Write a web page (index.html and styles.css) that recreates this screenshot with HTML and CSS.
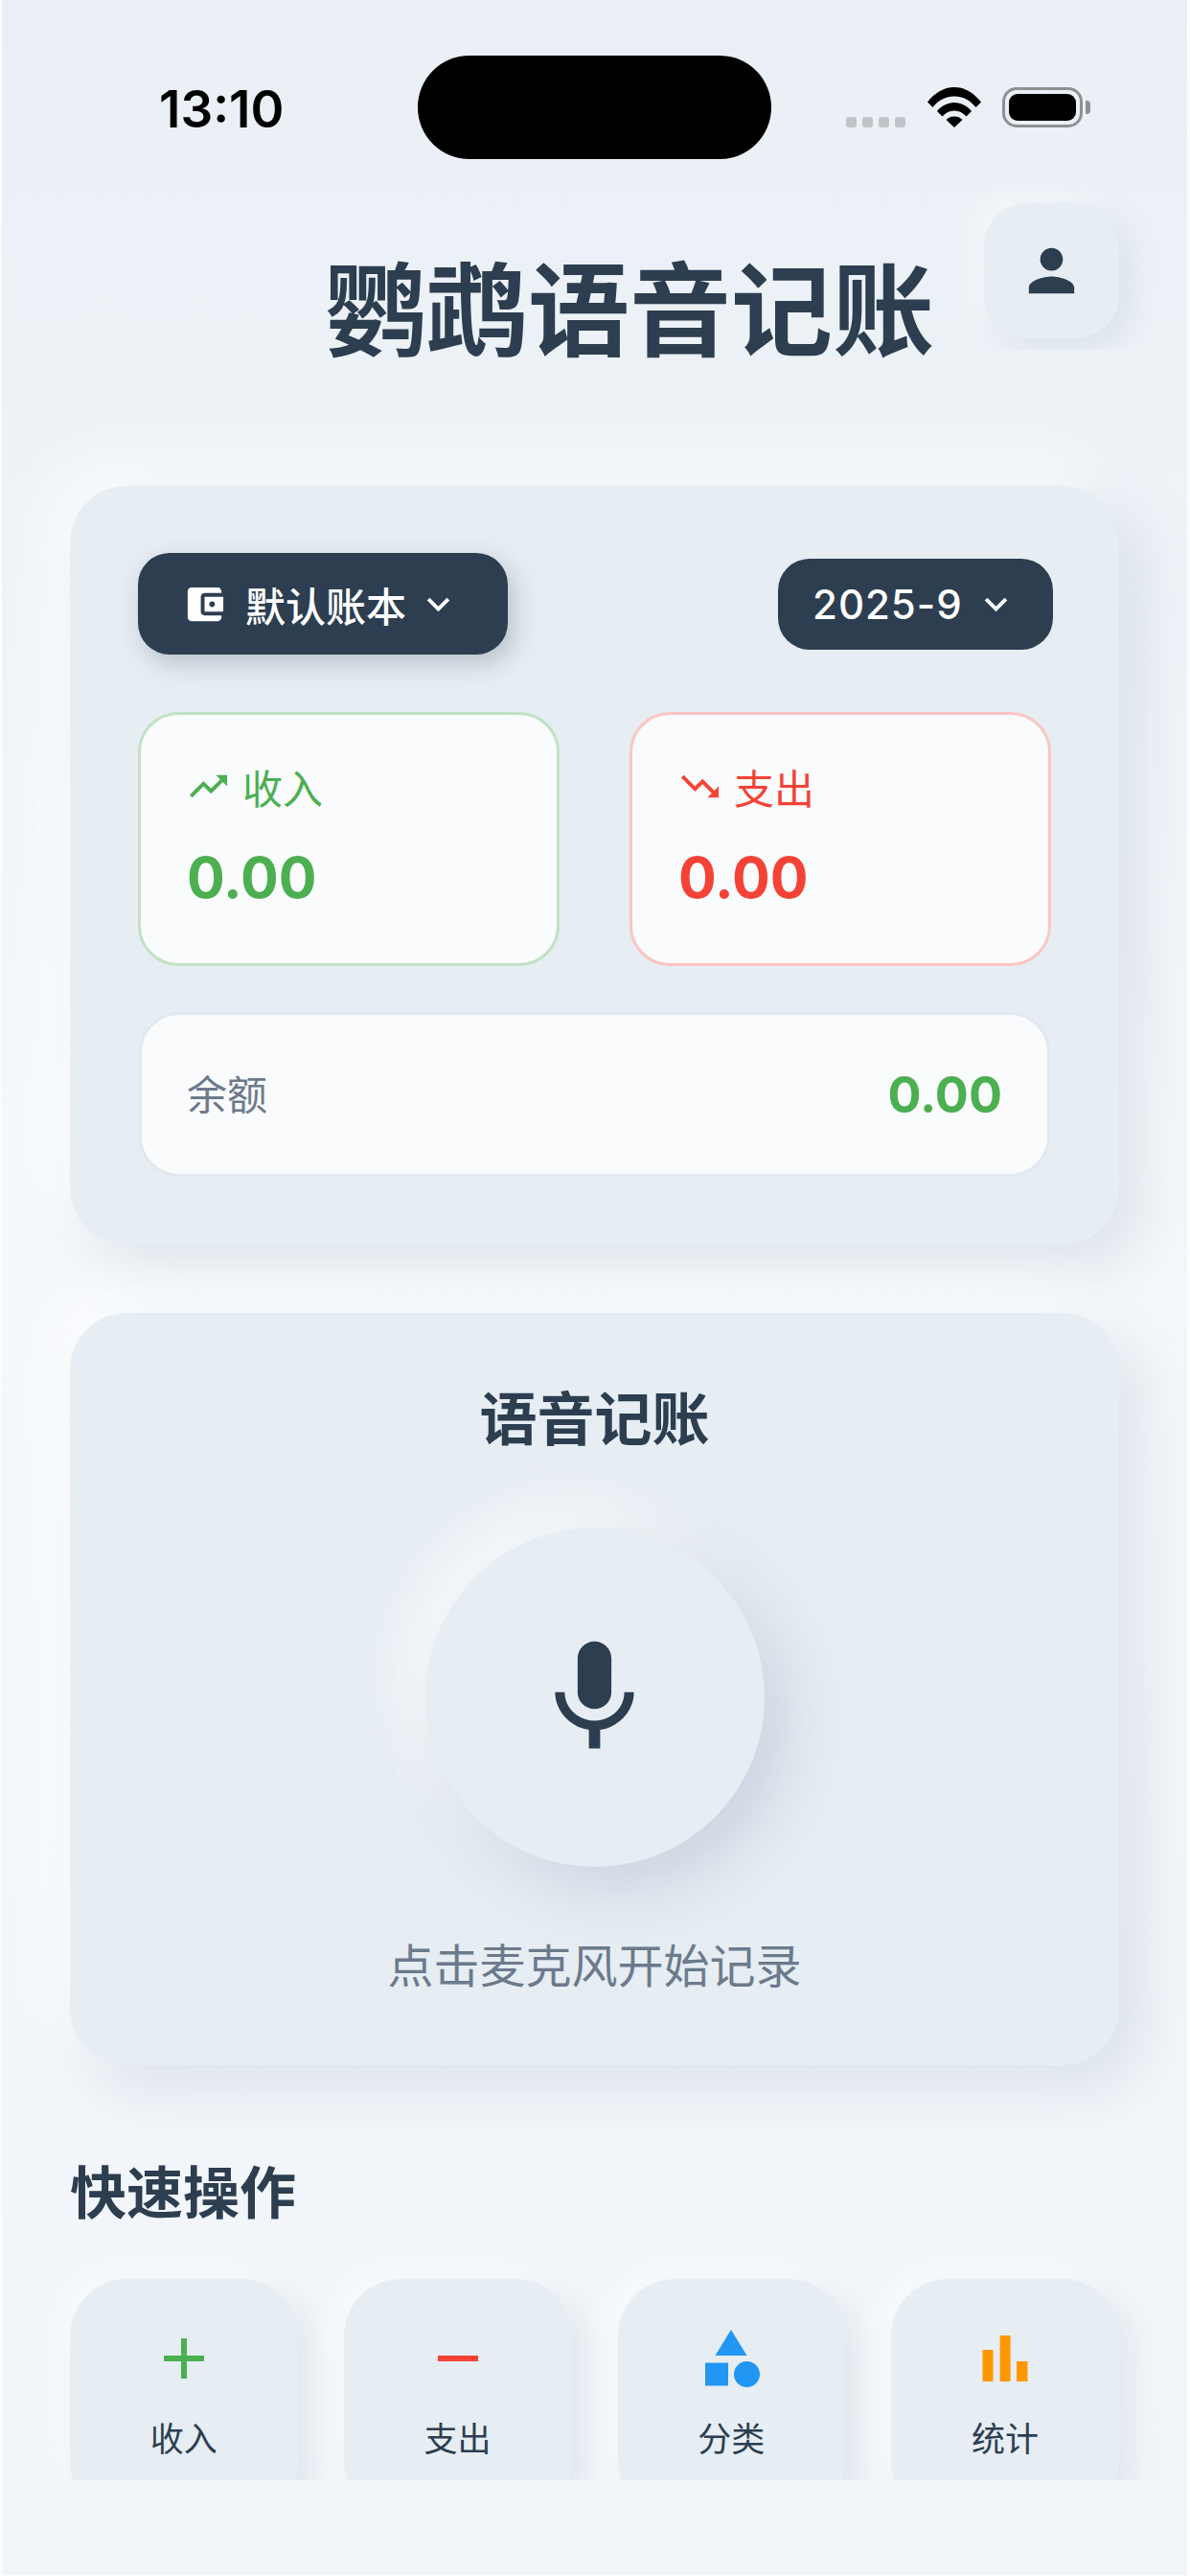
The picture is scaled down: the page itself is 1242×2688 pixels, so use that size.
FILE: index.html
```html
<!DOCTYPE html>
<html lang="zh-CN">
<head>
<meta charset="utf-8">
<title>鹦鹉语音记账</title>
<link rel="stylesheet" href="styles.css">
</head>
<body>
<div class="screen">
  <div class="status-bar">
    <span class="time">13:10</span>
    <span class="island"></span>
    <div class="status-icons">
      <div class="signal"><i></i><i></i><i></i><i></i></div>
      <svg class="wifi" viewBox="0 0 56 42"><path d="M0 15.500C7.500 6 17 0 28 0s20.500 6 28 15.500l-5.500 5.500C44.500 13.500 37 9.500 28 9.500S11.500 13.500 5.500 21z"/><path d="M10 25c4.500-5.500 11-9 18-9s13.500 3.500 18 9l-5.500 5.500C37 26.500 33 24.500 28 24.500S19 26.500 15.500 30.500z"/><path d="M19.500 34c2.500-2.500 5-3.500 8.500-3.500s6 1 8.500 3.500L28 42z"/></svg>
      <div class="battery"><div class="battery-fill"></div></div>
      <div class="battery-cap"></div>
    </div>
  </div>

  <div class="scroll">
    <header class="app-header">
      <h1 class="app-title">鹦鹉语音记账</h1>
      <button class="profile-btn">
        <svg class="icon-person" viewBox="0 0 24 24"><path d="M12 12c2.210 0 4-1.790 4-4s-1.790-4-4-4-4 1.790-4 4 1.790 4 4 4zm0 2c-2.670 0-8 1.340-8 4v2h16v-2c0-2.660-5.330-4-8-4z"/></svg>
      </button>
    </header>

    <section class="card summary">
      <div class="selectors">
        <button class="pill pill-book">
          <svg class="pill-icon" viewBox="0 0 24 24"><path d="M21 18v1c0 1.100-.9 2-2 2H5c-1.110 0-2-.9-2-2V5c0-1.100.89-2 2-2h14c1.100 0 2 .9 2 2v1h-9c-1.110 0-2 .9-2 2v8c0 1.100.89 2 2 2h9zm-9-2h10V8H12v8zm4-2.500c-.83 0-1.500-.67-1.500-1.500s.67-1.500 1.500-1.500 1.500.67 1.500 1.500-.67 1.500-1.500 1.500z"/></svg>
          <span class="book-text">默认账本</span>
          <svg class="pill-icon" viewBox="0 0 24 24"><path d="M16.590 8.590L12 13.170 7.410 8.590 6 10l6 6 6-6z"/></svg>
        </button>
        <button class="pill pill-date">
          <span class="date-text">2025-9</span>
          <svg class="pill-icon" viewBox="0 0 24 24"><path d="M16.590 8.590L12 13.170 7.410 8.590 6 10l6 6 6-6z"/></svg>
        </button>
      </div>
      <div class="totals">
        <div class="total total-in">
          <div class="total-label">
            <svg class="trend" viewBox="0 0 24 24"><path d="M16 6l2.290 2.290-4.880 4.880-4-4L2 16.590 3.410 18l6-6 4 4 6.300-6.290L22 12V6z"/></svg>
            <span>收入</span>
          </div>
          <div class="total-value">0.00</div>
        </div>
        <div class="total total-out">
          <div class="total-label">
            <svg class="trend" viewBox="0 0 24 24"><path d="M16 18l2.290-2.290-4.880-4.880-4 4L2 7.410 3.410 6l6 6 4-4 6.300 6.290L22 12v6z"/></svg>
            <span>支出</span>
          </div>
          <div class="total-value">0.00</div>
        </div>
      </div>
      <div class="balance">
        <span class="balance-label">余额</span>
        <span class="balance-value">0.00</span>
      </div>
    </section>

    <section class="card voice">
      <h2 class="voice-title">语音记账</h2>
      <button class="mic-btn">
        <svg class="mic-icon" viewBox="0 0 24 24"><path d="M12 14c1.660 0 2.990-1.340 2.990-3L15 5c0-1.660-1.340-3-3-3S9 3.340 9 5v6c0 1.660 1.340 3 3 3zm5.300-3c0 3-2.540 5.100-5.300 5.100S6.700 14 6.700 11H5c0 3.410 2.720 6.230 6 6.720V21h2v-3.280c3.280-.48 6-3.300 6-6.720h-1.700z"/></svg>
      </button>
      <p class="voice-hint">点击麦克风开始记录</p>
    </section>

    <h2 class="quick-title">快速操作</h2>
    <div class="quick-grid">
      <div class="quick-item">
        <svg class="quick-icon c-green" viewBox="0 0 24 24"><path d="M19 13h-6v6h-2v-6H5v-2h6V5h2v6h6v2z"/></svg>
        <span>收入</span>
      </div>
      <div class="quick-item">
        <svg class="quick-icon c-red" viewBox="0 0 24 24"><path d="M19 13H5v-2h14v2z"/></svg>
        <span>支出</span>
      </div>
      <div class="quick-item">
        <svg class="quick-icon c-blue" viewBox="0 0 24 24"><path d="M12 2l-5.500 9h11z"/><circle cx="17.500" cy="17.500" r="4.500"/><path d="M3 13.500h8v8H3z"/></svg>
        <span>分类</span>
      </div>
      <div class="quick-item">
        <svg class="quick-icon c-orange" viewBox="0 0 24 24"><path d="M4.170 9h3.670v11H4.170zM10.200 4h3.670v16H10.200zM16 13h3.830v7H16z"/></svg>
        <span>统计</span>
      </div>
    </div>
  </div>
</div>
</body>
</html>
```

FILE: styles.css
```css
* { box-sizing: border-box; margin: 0; padding: 0; }

html, body {
  width: 1242px;
  height: 2688px;
  overflow: hidden;
}

body {
  background: #fbfcfd;
  font-family: "Noto Sans CJK SC", "Inter", sans-serif;
  color: #2c3e50;
}

button {
  border: 0;
  font: inherit;
  color: inherit;
  background: none;
}

.screen {
  width: 1237px;
  height: 2687px;
  margin-left: 2px;
  background: linear-gradient(180deg, #e9eff5 0%, #f5f8fb 45%, #f1f5f9 100%);
}

/* status bar */
.status-bar {
  height: 190px;
  padding-top: 58px;
  display: grid;
  grid-template-columns: 1fr 369px 1fr;
  align-items: start;
}
.time {
  font-family: "Inter", sans-serif;
  font-weight: 600;
  font-size: 53px;
  line-height: 64px;
  margin: 24px 0 0 164px;
  color: #000;
}
.island {
  height: 108px;
  border-radius: 54px;
  background: #000;
}
.status-icons {
  display: flex;
  align-items: flex-start;
  padding-top: 33px;
  padding-left: 78px;
}
.signal {
  display: flex;
  gap: 6px;
  margin-top: 31px;
}
.signal i {
  display: block;
  width: 11px;
  height: 11px;
  border-radius: 3px;
  background: #c1c5c9;
}
.wifi {
  width: 56px;
  height: 42px;
  margin-left: 23px;
  fill: #000;
}
.battery {
  width: 84px;
  height: 42px;
  margin-left: 22px;
  padding: 4px;
  border: 3.500px solid #8e9092;
  border-radius: 15px;
}
.battery-fill {
  height: 100%;
  border-radius: 9px;
  background: #000;
}
.battery-cap {
  width: 5px;
  height: 14px;
  margin: 14px 0 0 3px;
  border-radius: 0 4px 4px 0;
  background: #8e9092;
}

/* scroll area, clipped at the bottom */
.scroll {
  height: 2398px;
  padding: 0 71px;
  overflow: hidden;
}

/* header */
.app-header {
  height: 317px;
  padding-top: 22px;
  display: flex;
  align-items: flex-start;
  justify-content: flex-end;
  gap: 52px;
}
.app-title {
  font-size: 106px;
  line-height: 150px;
  margin-top: 30px;
  font-weight: 700;
  color: #2c3e50;
  white-space: nowrap;
}
.profile-btn {
  flex: none;
  width: 141px;
  height: 141px;
  border-radius: 45px;
  background: #e6edf3;
  box-shadow: 12px 12px 30px rgba(163, 177, 198, .22), -12px -12px 30px rgba(255, 255, 255, .5);
  clip-path: inset(-12px -60px -12px -60px);
  display: flex;
  align-items: center;
  justify-content: center;
}
.icon-person {
  width: 71px;
  height: 71px;
  fill: #2c3e50;
}

/* cards */
.card {
  border-radius: 60px;
  background: #e6edf3;
  box-shadow: 24px 24px 60px rgba(163, 177, 198, .28), -24px -24px 60px rgba(255, 255, 255, .75);
}

.summary {
  height: 792px;
  padding: 70px 71px;
}
.selectors {
  display: flex;
  justify-content: space-between;
  align-items: center;
  height: 106px;
}
.pill {
  display: flex;
  align-items: center;
  background: #2c3e50;
  color: #fff;
  font-size: 42px;
  border-radius: 33px;
}
.pill-book {
  width: 386px;
  height: 106px;
  padding-left: 46px;
  box-shadow: 6px 9px 24px rgba(44, 62, 80, .25);
}
.book-text {
  font-weight: 500;
  margin: 0 10px 0 19px;
}
.pill-date {
  width: 287px;
  height: 95px;
  padding-left: 36px;
  margin-right: -2px;
}
.pill-icon {
  width: 47px;
  height: 47px;
  fill: #fff;
  flex: none;
}
.date-text {
  font-family: "Inter", sans-serif;
  font-weight: 500;
  letter-spacing: 1px;
  margin-right: 11px;
}

.totals {
  display: grid;
  grid-template-columns: 1fr 1fr;
  gap: 73px;
  margin-top: 60px;
}
.total {
  height: 265px;
  padding: 46px 47px 0;
  border: 3px solid;
  border-radius: 42px;
  background: #fafbfd;
}
.total-in { border-color: #c0e2c4; color: #4caf50; }
.total-out { border-color: #fcc5c1; color: #f44336; }
.total-label {
  display: flex;
  align-items: center;
  gap: 12px;
  height: 56px;
  font-size: 42px;
}
.trend {
  width: 47px;
  height: 47px;
  fill: currentColor;
  flex: none;
}
.total-value {
  font-family: "Inter", sans-serif;
  font-size: 59px;
  font-weight: 700;
  line-height: 72px;
  margin: 32px 0 0 1px;
}

.balance {
  height: 172px;
  margin: 48px 1px 0;
  padding: 0 47px;
  display: flex;
  align-items: center;
  justify-content: space-between;
  border: 3px solid #e1e8f0;
  border-radius: 42px;
  background: #fafbfd;
}
.balance-label {
  font-size: 42px;
  margin-bottom: 5px;
  color: #6c7a8c;
}
.balance-value {
  font-family: "Inter", sans-serif;
  font-size: 52px;
  font-weight: 700;
  color: #4caf50;
}

/* voice */
.voice {
  height: 785px;
  margin-top: 71px;
  padding-top: 66px;
  display: flex;
  flex-direction: column;
  align-items: center;
}
.voice-title {
  font-size: 60px;
  line-height: 82px;
  font-weight: 700;
}
.mic-btn {
  width: 354px;
  height: 354px;
  margin-top: 76px;
  border-radius: 50%;
  background: #e6edf3;
  box-shadow: 24px 24px 60px rgba(163, 177, 198, .4), -24px -24px 60px rgba(255, 255, 255, .7);
  display: flex;
  align-items: center;
  justify-content: center;
}
.mic-icon {
  width: 141px;
  height: 141px;
  fill: #2c3e50;
}
.voice-hint {
  font-size: 48px;
  line-height: 68px;
  margin-top: 66px;
  color: #6c7a8c;
}

/* quick actions */
.quick-title {
  font-size: 59px;
  line-height: 82px;
  font-weight: 700;
  margin: 89px 0 52px;
}
.quick-grid {
  display: grid;
  grid-template-columns: repeat(4, 1fr);
  gap: 48px;
}
.quick-item {
  height: 251px;
  padding-top: 47px;
  border-radius: 60px;
  background: #e6edf3;
  box-shadow: 12px 12px 30px rgba(163, 177, 198, .22), -12px -12px 30px rgba(255, 255, 255, .6);
  display: flex;
  flex-direction: column;
  align-items: center;
  font-size: 35px;
  color: #2c3e50;
}
.quick-icon {
  width: 72px;
  height: 72px;
  flex: none;
}
.quick-item span {
  margin-top: 22px;
  line-height: 48px;
}
.c-green { fill: #4caf50; }
.c-red { fill: #f44336; }
.c-blue { fill: #2196f3; }
.c-orange { fill: #ff9800; }
```
